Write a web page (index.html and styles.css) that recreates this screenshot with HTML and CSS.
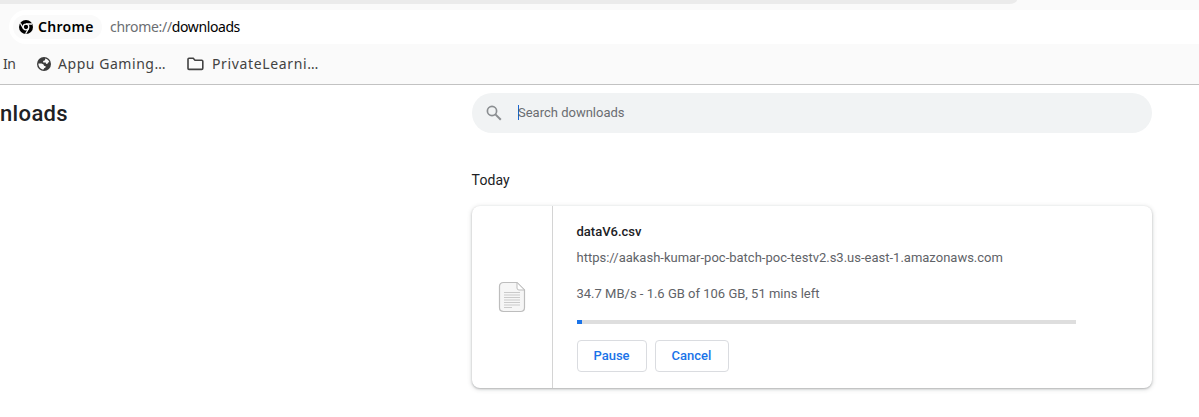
FILE: index.html
```html
<!DOCTYPE html>
<html lang="en">
<head>
<meta charset="utf-8">
<title>Downloads</title>
<link rel="stylesheet" href="styles.css">
</head>
<body>
<header class="browser">
  <div class="tabstrip"></div>
  <div class="omnibox">
    <div class="chip">
      <svg class="chrome-icon" width="14" height="14" viewBox="0 0 14 14"><circle cx="7" cy="7" r="7" fill="#000"/><circle cx="7" cy="7" r="2.8" fill="none" stroke="#fafafa" stroke-width="1.3"/><path d="M7 4H13M4.4 8.5 1.4 3.3M9.6 8.5 6.6 13.7" fill="none" stroke="#fafafa" stroke-width="1.3"/></svg>
      <span class="chip-label">Chrome</span>
    </div>
    <div class="url"><span class="scheme">chrome://</span><span class="host">downloads</span></div>
  </div>
  <nav class="bookmarks">
    <span class="mark-cut">In</span>
    <span class="mark mark-globe">
      <svg width="14" height="14" viewBox="0 0 14 14"><circle cx="7" cy="7" r="7" fill="#3c3c3c"/><path d="M8.2 1.6C10.2 2 11.7 3.2 12.3 5L11.2 5.4 10.2 6.9 9 6.8 8.7 5.6 6.2 5.4 6.1 3.9 8 3.2zM1.4 6.4 4.6 6.6 6.6 7.5 7 8.8 8.7 9.2 8.5 10.6 7.1 11.2 6.6 12.6C3.7 12.4 1.2 9.6 1.4 6.4z" fill="#fafafa"/></svg>
      <span class="gaming">Appu Gaming…</span>
    </span>
    <span class="mark mark-folder">
      <svg width="17" height="14" viewBox="0 0 17 14"><path d="M1 11.5V2.2Q1 1.2 2 1.2H6.2L8 3.2H14.7Q15.8 3.2 15.8 4.2V11.3Q15.8 12.4 14.7 12.4H2Q1 12.4 1 11.5z" fill="none" stroke="#424242" stroke-width="1.6"/></svg>
      <span class="learning">PrivateLearni…</span>
    </span>
  </nav>
</header>
<main class="page">
  <h1 class="title">nloads</h1>
  <section class="content">
    <div class="search">
      <svg width="16" height="16" viewBox="0 0 16 16" fill="none" stroke="#8b8e91"><circle cx="6" cy="6" r="4.6" stroke-width="1.7"/><path d="M9.4 9.4 14.8 14.8" stroke-width="2"/></svg>
      <span class="caret"></span>
      <span class="placeholder">Search downloads</span>
    </div>
    <h2 class="day">Today</h2>
    <article class="card">
      <div class="file-icon">
        <svg width="28" height="32" viewBox="0 0 28 32"><path d="M5.5 1.5H19L26.5 9V26.5Q26.5 30.5 22.5 30.5H5.5Q1.5 30.5 1.5 26.5V5.5Q1.5 1.5 5.5 1.5z" fill="#f6f6f6" stroke="#bdbdbd" stroke-width="1.2"/><path d="M19 1.5V7Q19 9 21 9H26.5z" fill="#fff" stroke="#bdbdbd"/><path d="M6 11.5H22M6 14H22M6 16.5H22M6 19H22M6 21.5H22M6 24H22M6 26.5H14" stroke="#cacaca"/></svg>
      </div>
      <div class="details">
        <div class="name">dataV6.csv</div>
        <div class="source">https://aakash-kumar-poc-batch-poc-testv2.s3.us-east-1.amazonaws.com</div>
        <div class="status">34.7 MB/s - 1.6 GB of 106 GB, 51 mins left</div>
        <div class="progress"><div class="progress-value"></div></div>
        <div class="actions"><button class="btn pause">Pause</button><button class="btn cancel">Cancel</button></div>
      </div>
    </article>
  </section>
</main>
</body>
</html>
```
FILE: styles.css
```css
* { box-sizing: border-box; }
body { margin: 0; width: 1199px; height: 417px; overflow: hidden; background: #fff; font-family: Roboto, sans-serif; }
.browser { height: 85px; background: #fafafa; border-bottom: 1px solid #c2c2c2; font-family: "Noto Sans", sans-serif; }
.tabstrip { width: 1017px; height: 4px; background: #ebebeb; border-bottom-right-radius: 8px 4px; }
.omnibox { margin: 6px 0 0 9px; height: 34px; padding-left: 4px; display: flex; align-items: center; background: #fff; border-radius: 17px 0 0 17px; }
.chip { width: 89px; height: 24px; padding-left: 6px; display: flex; align-items: center; background: #fafafa; border-radius: 12px; white-space: nowrap; }
.chip-label { margin-left: 5px; font-size: 14px; font-weight: 600; line-height: 20px; letter-spacing: .3px; color: #000; }
.url { margin-left: 8px; font-size: 14px; line-height: 20px; letter-spacing: -.4px; white-space: nowrap; }
.scheme { color: #6b6e72; letter-spacing: -.3px; }
.host { color: #000; }
.bookmarks { height: 40px; padding-left: 3px; display: flex; align-items: center; font-size: 14px; line-height: 20px; color: #424242; white-space: nowrap; }
.mark-cut { width: 34px; letter-spacing: -.4px; }
.mark { display: flex; align-items: center; }
.mark-globe { width: 150px; gap: 7px; }
.mark-folder { gap: 8px; }
.gaming { letter-spacing: .55px; }
.learning { letter-spacing: .65px; }
.page { display: flex; }
.title { width: 472px; margin: 15px 0 0; font-size: 22px; line-height: 28px; font-weight: 500; letter-spacing: .35px; color: #202124; }
.content { width: 680px; padding-top: 8px; }
.search { height: 40px; padding-left: 14px; display: flex; align-items: center; background: #f1f3f4; border-radius: 20px; font-size: 13px; color: #6a6d71; }
.placeholder { padding-bottom: 2px; }
.caret { width: 1px; height: 15px; margin-left: 16px; margin-right: -1px; margin-bottom: 1px; background: #1a66d0; }
.day { margin: 37px 0 0 -.4px; font-size: 14px; line-height: 20px; font-weight: 400; letter-spacing: .1px; color: #202124; }
.card { margin-top: 16px; height: 182px; display: flex; background: #fff; border-radius: 8px; box-shadow: 0 1px 2px rgba(60,64,67,.3), 0 1px 4px 1px rgba(60,64,67,.15); }
.file-icon { width: 81px; border-right: 1px solid #d4d4d4; display: flex; align-items: center; justify-content: center; }
.details { width: 523.4px; padding: 16px 0 0 23.5px; font-size: 13px; line-height: 20px; color: #5f6368; white-space: nowrap; }
.name { font-weight: 500; color: #202124; }
.source { margin-top: 6px; }
.status { margin-top: 16px; }
.progress { height: 4px; margin-top: 16px; background: #dedede; }
.progress-value { width: 5px; height: 4px; background: #1a73e8; }
.actions { display: flex; gap: 8px; margin-top: 16px; }
.btn { height: 32px; padding: 0; border: 1px solid #dadce0; border-radius: 4px; background: #fff; color: #1a73e8; font: 500 13px/20px Roboto, sans-serif; }
.pause { width: 70px; }
.cancel { width: 74px; }
```
